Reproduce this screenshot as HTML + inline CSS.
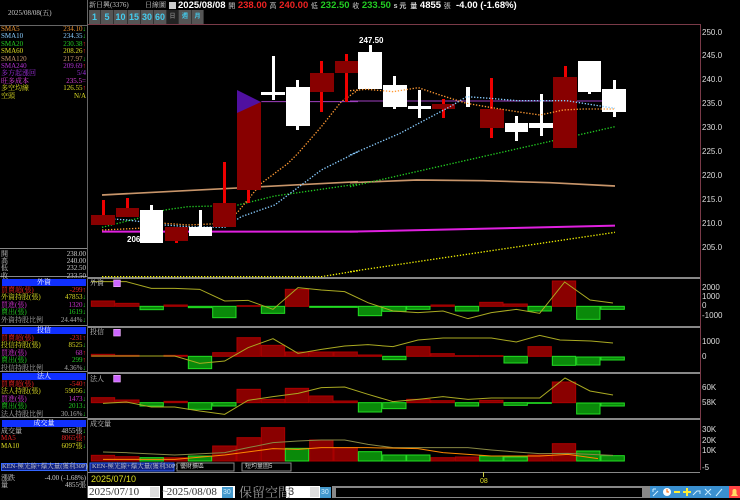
<!DOCTYPE html>
<html><head><meta charset="utf-8"><style>
*{margin:0;padding:0;box-sizing:border-box}
body{width:740px;height:498px;background:#000;position:relative;overflow:hidden;font-family:"Liberation Sans","Noto Sans CJK TC",sans-serif;color:#ccc}
.t{position:absolute;white-space:nowrap;line-height:1}
.s{font-family:"Liberation Serif","Noto Serif CJK SC",serif;font-size:7px}
.r{position:absolute;white-space:nowrap;font-family:"Liberation Serif","Noto Serif CJK SC",serif;font-size:7px;line-height:1}
.hd{position:absolute;left:2px;width:84px;height:7px;background:#1030ff;color:#fff;font-size:7px;text-align:center;line-height:7px;font-family:"Liberation Serif","Noto Serif CJK SC",serif}
.btn{position:absolute;top:10px;height:14px;background:#555;color:#4ce;font-size:9px;font-weight:bold;text-align:center;line-height:14px;border-right:1px solid #333}
.ax{position:absolute;left:702px;font-size:8px;color:#ddd;line-height:1}
</style></head><body>
<svg width="740" height="498" style="position:absolute;left:0;top:0">
<!-- frames -->
<line x1="87.5" y1="0" x2="87.5" y2="498" stroke="#666"/>
<line x1="0" y1="25.5" x2="87" y2="25.5" stroke="#666"/>
<line x1="88" y1="24.5" x2="700" y2="24.5" stroke="#7a3a48"/>
<line x1="700.5" y1="24" x2="700.5" y2="470" stroke="#7a3a48"/>
<line x1="88" y1="278" x2="700" y2="278" stroke="#888" stroke-width="2"/>
<line x1="88" y1="327" x2="700" y2="327" stroke="#888" stroke-width="2"/>
<line x1="88" y1="373" x2="700" y2="373" stroke="#888" stroke-width="2"/>
<line x1="88" y1="419" x2="700" y2="419" stroke="#888" stroke-width="2"/>
<line x1="0" y1="276.5" x2="87" y2="276.5" stroke="#888"/>
<line x1="0" y1="325.5" x2="87" y2="325.5" stroke="#888"/>
<line x1="0" y1="371.5" x2="87" y2="371.5" stroke="#888"/>
<line x1="0" y1="417.5" x2="87" y2="417.5" stroke="#888"/>
<line x1="0" y1="248.5" x2="87" y2="248.5" stroke="#888"/>
<line x1="88" y1="472.5" x2="700" y2="472.5" stroke="#888"/>
<!-- main chart lines -->
<g transform="translate(88,30) scale(0.33333)" fill="none">
<polyline points="42,495 810,455" stroke="#c8956a" stroke-width="5"/>
<polyline points="42,605 810,605" stroke="#e020e0" stroke-width="6"/>
<polyline points="42,740 700,740 810,722" stroke="#ee0" stroke-width="4" stroke-dasharray="4,5"/>
<polyline points="42,592 150,565 230,540 300,530 380,528 450,525 560,498 810,462" stroke="#2c2" stroke-width="4" stroke-dasharray="4,5"/>
<polyline points="42,565 120,570 230,585 300,590 410,592 460,560 560,525 700,420 810,365" stroke="#8cf" stroke-width="4" stroke-dasharray="4,5"/>
<polyline points="42,600 150,595 230,580 300,585 410,580 450,545 520,460 600,400 630,370 700,290 760,215 810,180" stroke="#f93" stroke-width="4" stroke-dasharray="4,5"/>
<polyline points="520,215 810,215" stroke="#a040c0" stroke-width="3"/>
</g>
<g transform="translate(350,30) scale(0.33333)" fill="none">
<polyline points="0,458 200,450 400,452 600,458 795,468" stroke="#c8956a" stroke-width="5"/>
<polyline points="0,605 795,587" stroke="#e020e0" stroke-width="6"/>
<polyline points="0,725 795,607" stroke="#ee0" stroke-width="4" stroke-dasharray="4,5"/>
<polyline points="0,470 795,290" stroke="#2c2" stroke-width="4" stroke-dasharray="4,5"/>
<polyline points="0,213 795,213" stroke="#a040c0" stroke-width="3"/>
</g>
<!-- candles -->
<g>
<g fill="#e00">
<rect x="102" y="200" width="3" height="25"/><rect x="126" y="198" width="3" height="19"/>
<rect x="175" y="227" width="3" height="16"/><rect x="223" y="162" width="3" height="65"/>
<rect x="247" y="180" width="3" height="23"/><rect x="320" y="61" width="3" height="51"/>
<rect x="345" y="54" width="3" height="48"/><rect x="442" y="99" width="3" height="19"/>
<rect x="490" y="78" width="3" height="60"/><rect x="564" y="66" width="3" height="20"/>
</g>
<g fill="#800">
<rect x="91" y="215" width="24" height="10"/><rect x="116" y="208" width="23" height="9"/>
<rect x="165" y="227" width="23" height="14"/><rect x="213" y="203" width="23" height="24"/>
<rect x="237" y="102" width="24" height="88"/><rect x="310" y="73" width="24" height="19"/>
<rect x="335" y="61" width="23" height="12"/><rect x="432" y="104" width="23" height="5"/>
<rect x="480" y="109" width="24" height="19"/><rect x="553" y="77" width="24" height="71"/>
</g>
<polygon points="237,90 261,102 237,113" fill="#5010a0"/>
<g fill="#fff">
<rect x="150" y="205" width="3" height="38"/><rect x="140" y="210" width="23" height="33"/>
<rect x="199" y="210" width="3" height="26"/><rect x="189" y="227" width="23" height="9"/>
<rect x="261" y="92" width="24" height="3"/><rect x="272" y="56" width="3" height="44"/>
<rect x="296" y="80" width="3" height="50"/><rect x="286" y="87" width="24" height="39"/>
<rect x="369" y="45" width="3" height="44"/><rect x="358" y="52" width="24" height="37"/>
<rect x="393" y="76" width="3" height="33"/><rect x="383" y="85" width="24" height="22"/>
<rect x="408" y="106" width="23" height="3"/><rect x="418" y="90" width="3" height="28"/>
<rect x="466" y="87" width="4" height="20"/>
<rect x="515" y="116" width="3" height="25"/><rect x="505" y="123" width="23" height="9"/>
<rect x="540" y="94" width="3" height="42"/><rect x="529" y="123" width="24" height="5"/>
<rect x="588" y="61" width="3" height="33"/><rect x="578" y="61" width="23" height="31"/>
<rect x="613" y="80" width="3" height="37"/><rect x="602" y="89" width="24" height="23"/>
</g>
</g>
<g transform="translate(350,30) scale(0.33333)" fill="none">
<polyline points="0,375 150,310 300,230 350,200 420,205 500,212 650,212 795,235" stroke="#8cf" stroke-width="4" stroke-dasharray="4,5"/>
<polyline points="0,182 50,178 130,185 205,173 270,195 350,220 420,232 500,245 570,255 640,240 700,237 795,237" stroke="#f93" stroke-width="4" stroke-dasharray="4,5"/>
</g>
<!-- indicator panels -->
<g transform="translate(88,276) scale(0.33333)" stroke-width="3">
<g fill="#8a0000" stroke="#a00">
<rect x="10" y="75" width="70" height="16"/><rect x="83" y="82" width="70" height="9"/><rect x="228" y="87" width="70" height="4"/><rect x="447" y="89" width="70" height="2"/><rect x="592" y="40" width="70" height="51"/><rect x="1029" y="87" width="70" height="4"/><rect x="1175" y="79" width="70" height="12"/><rect x="1248" y="84" width="70" height="7"/><rect x="1393" y="15" width="70" height="76"/>
<rect x="10" y="235" width="70" height="6"/><rect x="83" y="238" width="70" height="3"/><rect x="228" y="238" width="70" height="3"/><rect x="374" y="230" width="70" height="11"/><rect x="447" y="185" width="70" height="56"/><rect x="520" y="208" width="70" height="33"/><rect x="592" y="228" width="70" height="13"/><rect x="665" y="228" width="70" height="13"/><rect x="738" y="228" width="70" height="13"/><rect x="811" y="237" width="70" height="4"/><rect x="956" y="212" width="70" height="29"/><rect x="1029" y="233" width="70" height="8"/><rect x="1102" y="239" width="70" height="2"/><rect x="1175" y="239" width="70" height="2"/><rect x="1320" y="212" width="70" height="29"/>
<rect x="10" y="365" width="70" height="15"/><rect x="83" y="372" width="70" height="8"/><rect x="228" y="376" width="70" height="4"/><rect x="447" y="340" width="70" height="40"/><rect x="520" y="370" width="70" height="10"/><rect x="592" y="337" width="70" height="43"/><rect x="665" y="360" width="70" height="20"/><rect x="738" y="375" width="70" height="5"/><rect x="956" y="370" width="70" height="10"/><rect x="1029" y="374" width="70" height="6"/><rect x="1175" y="373" width="70" height="7"/><rect x="1393" y="318" width="70" height="62"/>
<rect x="10" y="538" width="70" height="17"/><rect x="83" y="542" width="70" height="13"/><rect x="228" y="545" width="70" height="10"/><rect x="374" y="510" width="70" height="45"/><rect x="447" y="485" width="70" height="70"/><rect x="520" y="455" width="70" height="100"/><rect x="665" y="492" width="70" height="63"/><rect x="738" y="515" width="70" height="40"/><rect x="1029" y="545" width="70" height="10"/><rect x="1102" y="543" width="70" height="12"/><rect x="1320" y="537" width="70" height="18"/><rect x="1393" y="503" width="70" height="52"/>
</g>
<g fill="#0a8a0a" stroke="#2d2">
<rect x="156" y="91" width="70" height="10"/><rect x="301" y="91" width="70" height="4"/><rect x="374" y="91" width="70" height="34"/><rect x="520" y="91" width="70" height="21"/><rect x="665" y="91" width="70" height="3"/><rect x="738" y="91" width="70" height="3"/><rect x="811" y="91" width="70" height="28"/><rect x="884" y="91" width="70" height="15"/><rect x="956" y="91" width="70" height="9"/><rect x="1102" y="91" width="70" height="14"/><rect x="1320" y="91" width="70" height="14"/><rect x="1466" y="91" width="70" height="39"/><rect x="1539" y="91" width="70" height="9"/>
<rect x="301" y="241" width="70" height="37"/><rect x="884" y="241" width="70" height="10"/><rect x="1248" y="241" width="70" height="20"/><rect x="1393" y="241" width="70" height="27"/><rect x="1466" y="243" width="70" height="24"/><rect x="1539" y="243" width="70" height="9"/>
<rect x="156" y="380" width="70" height="10"/><rect x="301" y="380" width="70" height="20"/><rect x="374" y="380" width="70" height="10"/><rect x="811" y="380" width="70" height="28"/><rect x="884" y="380" width="70" height="18"/><rect x="1102" y="380" width="70" height="10"/><rect x="1248" y="380" width="70" height="8"/><rect x="1320" y="380" width="70" height="2"/><rect x="1466" y="381" width="70" height="33"/><rect x="1539" y="381" width="70" height="9"/>
<rect x="156" y="545" width="70" height="10"/><rect x="301" y="540" width="70" height="15"/><rect x="592" y="517" width="70" height="38"/><rect x="811" y="527" width="70" height="28"/><rect x="884" y="537" width="70" height="18"/><rect x="956" y="537" width="70" height="18"/><rect x="1175" y="540" width="70" height="15"/><rect x="1248" y="543" width="70" height="12"/><rect x="1466" y="525" width="70" height="30"/><rect x="1539" y="539" width="70" height="16"/>
</g>
<g fill="none" stroke="#aa2" stroke-width="3">
<polyline points="10,17 115,17 190,37 260,37 335,40 410,75 480,73 555,100 630,35 700,42 770,47 840,80 915,105 990,110 1065,105 1140,128 1210,110 1285,100 1355,112 1430,18 1506,72 1575,81"/>
<polyline points="10,240 260,240 335,262 410,255 480,215 555,188 630,232 700,220 770,210 840,206 915,212 990,192 1065,186 1210,186 1285,198 1355,178 1416,192 1509,195 1575,201"/>
<polyline points="45,382 115,378 190,393 260,393 335,405 410,415 480,373 555,362 630,352 700,335 770,333 840,355 915,377 990,370 1065,362 1140,370 1210,366 1285,366 1355,366 1431,306 1506,345 1575,357"/>
<polyline points="45,528 115,530 260,537 410,530 480,515 555,500 630,495 700,492 770,492 840,505 915,515 1065,515 1140,515 1210,522 1285,528 1355,533 1440,532 1575,538" stroke="#884"/>
<polyline points="45,550 260,550 410,537 555,518 630,520 700,515 840,515 990,518 1065,530 1210,540 1355,540 1440,535 1530,548" stroke="#f80"/>
</g>
<g fill="#c6f" stroke="#eaf" stroke-width="2">
<rect x="77" y="12" width="20" height="20"/><rect x="77" y="160" width="20" height="20"/><rect x="77" y="298" width="20" height="20"/>
</g>
</g>
<line x1="483.5" y1="472" x2="483.5" y2="477" stroke="#cc4"/>
<!-- bottom widgets -->
<rect x="88" y="486" width="72" height="12" fill="#fff"/><rect x="150" y="487" width="9" height="10" fill="#ddd"/>
<rect x="163" y="486" width="72" height="12" fill="#fff"/><rect x="224" y="487" width="9" height="10" fill="#ddd"/>
<rect x="222" y="487" width="11" height="11" fill="#49c"/>
<rect x="286" y="486" width="34" height="12" fill="#fff"/><rect x="310" y="487" width="9" height="10" fill="#ddd"/>
<rect x="320" y="487" width="11" height="11" fill="#49c"/>
<rect x="332" y="486" width="318" height="12" fill="#888"/><rect x="336" y="488" width="306" height="9" fill="#000"/>
<rect x="650" y="486" width="90" height="12" fill="#3a90d0"/>
<rect x="729" y="486" width="11" height="12" fill="#f44"/><path d="M731 496 h7 l-1.5-2 v-3 a2 2 0 0 0-4 0 v3z" fill="#fd6"/>
<circle cx="667" cy="492" r="4" fill="#fff"/><path d="M667 489 v3 h2" stroke="#f60" fill="none"/>
<rect x="674" y="491" width="6" height="2" fill="#fe3"/><rect x="683" y="491" width="8" height="2" fill="#fe3"/><rect x="686" y="488" width="2" height="8" fill="#fe3"/>
<path d="M653 496 l5-5 M653 489 v3 M653 489 h3 M693 495 l4-4 h3 v3 M705 489 l6 6 M711 489 l-6 6 M716 496 l6-7" stroke="#cef" fill="none"/>
<rect x="90" y="463" width="84" height="8" fill="#102080" stroke="#36f"/>
<rect x="177" y="463" width="57" height="8" fill="#000" stroke="#888"/>
<rect x="242" y="463" width="49" height="8" fill="#000" stroke="#888"/>
</svg>

<!-- header -->
<div class="r" style="left:8px;top:10px;color:#ccc">2025/08/08(五)</div>
<div class="t" style="left:89px;top:2px;font-size:7px;color:#ccc;font-family:'Liberation Serif','Noto Serif CJK SC',serif">新日興(3376)</div>
<div class="t" style="left:145px;top:2px;font-size:7px;color:#ccc;font-family:'Liberation Serif','Noto Serif CJK SC',serif">日線圖</div>
<div class="t" style="left:169px;top:2px;width:7px;height:7px;background:#ccc"></div>
<div class="t" style="left:178px;top:1px;font-size:9.5px;font-weight:bold;color:#fff">2025/08/08 <span style="font-size:7px;color:#ccc;font-weight:normal">開</span> <span style="color:#e22">238.00</span> <span style="font-size:7px;color:#ccc;font-weight:normal">高</span> <span style="color:#e22">240.00</span> <span style="font-size:7px;color:#ccc;font-weight:normal">低</span> <span style="color:#2c2">232.50</span> <span style="font-size:7px;color:#ccc;font-weight:normal">收</span> <span style="color:#2c2">233.50</span> <span style="font-size:7px;color:#ccc">s 元 &nbsp;量</span> 4855 <span style="font-size:7px;color:#ccc;font-weight:normal">張</span> &nbsp;-4.00 (-1.68%)</div>
<div class="btn" style="left:89px;width:12px">1</div><div class="btn" style="left:101px;width:13px">5</div><div class="btn" style="left:114px;width:14px">10</div><div class="btn" style="left:128px;width:13px">15</div><div class="btn" style="left:141px;width:13px">30</div><div class="btn" style="left:154px;width:13px">60</div><div class="btn" style="left:167px;width:12px;background:#222;color:#777;font-size:6px">日</div><div class="btn" style="left:179px;width:13px;font-size:6px">週</div><div class="btn" style="left:192px;width:12px;font-size:6px">月</div>

<!-- left SMA list -->
<div class="r" style="left:1px;top:26px;line-height:7.4px">
<span style="color:#e89030">SMA5</span><br><span style="color:#8cf">SMA10</span><br><span style="color:#2c2">SMA20</span><br><span style="color:#dd2">SMA60</span><br><span style="color:#c8956a">SMA120</span><br><span style="color:#b030d0">SMA240</span><br><span style="color:#a030e0">多方起漲回</span><br><span style="color:#e040e0">旺多成本</span><br><span style="color:#dd2">多空均線</span><br><span style="color:#dd2">空頭</span></div>
<div class="r" style="left:40px;top:26px;width:46px;text-align:right;line-height:7.4px">
<span style="color:#e89030">234.10<b style="color:#2c2">↓</b></span><br><span style="color:#8cf">234.35<b style="color:#2c2">↓</b></span><br><span style="color:#2c2">230.38<b style="color:#e22">↑</b></span><br><span style="color:#dd2">208.26<b style="color:#e22">↑</b></span><br><span style="color:#c8956a">217.97<b style="color:#2c2">↓</b></span><br><span style="color:#b030d0">209.69<b style="color:#e22">↑</b></span><br><span style="color:#a030e0">5/4</span><br><span style="color:#e040e0">235.5=</span><br><span style="color:#dd2">126.55<b style="color:#e22">↑</b></span><br><span style="color:#dd2">N/A</span></div>

<div class="r" style="left:1px;top:251px;line-height:7.2px;color:#ccc">開<br>高<br>低<br>收</div>
<div class="r" style="left:40px;top:251px;width:46px;text-align:right;line-height:7.2px;color:#ccc">238.00<br>240.00<br>232.50<br>233.50</div>

<div class="hd" style="top:279px">外資</div>
<div class="r" style="left:1px;top:287px;line-height:7.4px"><span style="color:#e22">買賣超(張)</span><br><span style="color:#dd2">外資持股(張)</span><br><span style="color:#c3c">買進(張)</span><br><span style="color:#2c2">賣出(張)</span><br><span style="color:#aaa">外資持股比例</span></div>
<div class="r" style="left:40px;top:287px;width:46px;text-align:right;line-height:7.4px"><span style="color:#e22">-299↑</span><br><span style="color:#dd2">47853<b style="color:#2c2">↓</b></span><br><span style="color:#c3c">1320<b style="color:#2c2">↓</b></span><br><span style="color:#2c2">1619↓</span><br><span style="color:#aaa">24.44%<b style="color:#2c2">↓</b></span></div>

<div class="hd" style="top:327px">投信</div>
<div class="r" style="left:1px;top:335px;line-height:7.4px"><span style="color:#e22">買賣超(張)</span><br><span style="color:#dd2">投信持股(張)</span><br><span style="color:#c3c">買進(張)</span><br><span style="color:#2c2">賣出(張)</span><br><span style="color:#aaa">投信持股比例</span></div>
<div class="r" style="left:40px;top:335px;width:46px;text-align:right;line-height:7.4px"><span style="color:#e22">-231↑</span><br><span style="color:#dd2">8525<b style="color:#2c2">↓</b></span><br><span style="color:#c3c">68<b style="color:#e22">↑</b></span><br><span style="color:#2c2">299<b style="color:#e22">↑</b></span><br><span style="color:#aaa">4.36%<b style="color:#2c2">↓</b></span></div>

<div class="hd" style="top:373px">法人</div>
<div class="r" style="left:1px;top:381px;line-height:7.4px"><span style="color:#e22">買賣超(張)</span><br><span style="color:#dd2">法人持股(張)</span><br><span style="color:#c3c">買進(張)</span><br><span style="color:#2c2">賣出(張)</span><br><span style="color:#aaa">法人持股比例</span></div>
<div class="r" style="left:40px;top:381px;width:46px;text-align:right;line-height:7.4px"><span style="color:#e22">-540↑</span><br><span style="color:#dd2">59056<b style="color:#2c2">↓</b></span><br><span style="color:#c3c">1473<b style="color:#2c2">↓</b></span><br><span style="color:#2c2">2013↓</span><br><span style="color:#aaa">30.16%<b style="color:#2c2">↓</b></span></div>

<div class="hd" style="top:420px">成交量</div>
<div class="r" style="left:1px;top:428px;line-height:7.4px"><span style="color:#ccc">成交量</span><br><span style="color:#e22">MA5</span><br><span style="color:#dd2">MA10</span></div>
<div class="r" style="left:40px;top:428px;width:46px;text-align:right;line-height:7.4px"><span style="color:#ccc">4855張<b style="color:#2c2">↓</b></span><br><span style="color:#e22">8065張↑</span><br><span style="color:#dd2">6097張<b style="color:#2c2">↓</b></span></div>

<div class="t" style="left:1px;top:463px;width:86px;height:8px;background:#102080;border:1px solid #36f;font-size:6.5px;color:#ccc;font-family:'Liberation Serif','Noto Serif CJK SC',serif;line-height:6px">KEN-極光線+爆大量(獲利30P)</div>
<div class="r" style="left:1px;top:475px;line-height:7.4px;color:#ccc">漲跌<br>量</div>
<div class="r" style="left:30px;top:475px;width:56px;text-align:right;line-height:7.4px;color:#ccc">-4.00 (-1.68%)<br>4855張</div>

<!-- panel labels -->
<div class="r" style="left:90px;top:280px;color:#ccc">外資</div>
<div class="r" style="left:90px;top:329px;color:#ccc">投信</div>
<div class="r" style="left:90px;top:376px;color:#ccc">法人</div>
<div class="r" style="left:90px;top:421px;color:#ccc">成交量</div>
<div class="t" style="left:127px;top:236px;font-size:8px;color:#fff;font-weight:bold">206.00</div>
<div class="t" style="left:359px;top:37px;font-size:8px;color:#fff;font-weight:bold">247.50</div>

<!-- axis -->
<div class="ax" style="top:29px">250.0</div><div class="ax" style="top:52px">245.0</div><div class="ax" style="top:76px">240.0</div><div class="ax" style="top:100px">235.0</div><div class="ax" style="top:124px">230.0</div><div class="ax" style="top:148px">225.0</div><div class="ax" style="top:172px">220.0</div><div class="ax" style="top:196px">215.0</div><div class="ax" style="top:220px">210.0</div><div class="ax" style="top:244px">205.0</div>
<div class="ax" style="top:284px">2000</div><div class="ax" style="top:293px">1000</div><div class="ax" style="top:302px">0</div><div class="ax" style="top:312px">-1000</div>
<div class="ax" style="top:338px">1000</div><div class="ax" style="top:353px">0</div>
<div class="ax" style="top:384px">60K</div><div class="ax" style="top:399px">58K</div>
<div class="ax" style="top:426px">30K</div><div class="ax" style="top:437px">20K</div><div class="ax" style="top:447px">10K</div><div class="ax" style="top:464px">-5</div>

<!-- bottom -->
<div class="t" style="left:92px;top:464px;font-size:6.5px;color:#ccc;font-family:'Liberation Serif','Noto Serif CJK SC',serif">KEN-極光線+爆大量(獲利30P)</div>
<div class="t" style="left:180px;top:464px;font-size:6px;color:#ccc">優財擴區</div>
<div class="t" style="left:245px;top:464px;font-size:6px;color:#ccc">短均量圖5</div>
<div class="t" style="left:91px;top:475px;font-size:9px;color:#dd2">2025/07/10</div>
<div class="t" style="left:480px;top:478px;font-size:7px;color:#dd2">08</div>
<div class="t" style="left:89px;top:487px;font-size:11px;color:#333;font-family:'Liberation Serif',serif">2025/07/10</div>
<div class="t" style="left:162px;top:487px;font-size:11px;color:#999">~</div>
<div class="t" style="left:164px;top:487px;font-size:11px;color:#333;font-family:'Liberation Serif',serif">&nbsp;2025/08/08</div>
<div class="t" style="left:239px;top:486px;font-size:13px;color:#999;font-family:'Liberation Serif','Noto Serif CJK SC',serif">保留空間</div>
<div class="t" style="left:288px;top:487px;font-size:11px;color:#333">3</div>
<div class="t" style="left:223px;top:489px;font-size:7px;color:#cef">30</div>
<div class="t" style="left:321px;top:489px;font-size:7px;color:#cef">30</div>
</body></html>
